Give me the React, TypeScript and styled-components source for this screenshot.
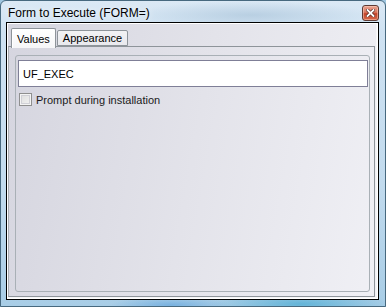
import styled, { createGlobalStyle } from "styled-components";

const GlobalStyle = createGlobalStyle`
  html, body {
    margin: 0;
    padding: 0;
    background: #9fc6e0;
  }
  * {
    box-sizing: border-box;
  }
`;

const Window = styled.div`
  width: 386px;
  height: 307px;
  display: flex;
  flex-direction: column;
  padding: 0 6px 6px 5px;
  border: 1px solid #47697f;
  border-radius: 6px 6px 0 0;
  background:
    radial-gradient(ellipse 90px 12px at 300px 303px, rgba(70, 170, 210, 0.7), transparent),
    radial-gradient(ellipse 60px 8px at 170px 304px, rgba(90, 160, 220, 0.6), transparent),
    radial-gradient(ellipse 120px 14px at 250px 14px, rgba(150, 180, 205, 0.45), transparent),
    linear-gradient(180deg, #dbe9f5 0%, #cfe2f2 10%, #c2dbee 60%, #a8cde6 100%);
  font-family: "Liberation Sans", Arial, sans-serif;
  overflow: hidden;
`;

const TitleBar = styled.div`
  height: 21px;
  display: flex;
  align-items: flex-start;
  justify-content: space-between;
`;

const Title = styled.span`
  margin-top: 5px;
  padding-left: 2px;
  font-size: 12px;
  color: #000;
  text-shadow: 0 0 6px rgba(255, 255, 255, 0.9);
`;

const CloseButton = styled.div`
  width: 17px;
  height: 16px;
  margin-top: 4px;
  display: flex;
  align-items: center;
  justify-content: center;
  border: 1px solid #5e3a34;
  border-radius: 3px;
  background: linear-gradient(180deg, #e9a593 0%, #d9775f 45%, #c2442a 55%, #d5684a 100%);
  box-shadow: inset 0 0 0 1px rgba(255, 210, 190, 0.5);
`;

const Client = styled.div`
  flex: 1;
  display: flex;
  flex-direction: column;
  border: 1px solid #000;
  padding: 5px 3px 2px 1px;
  background: linear-gradient(100deg, #d5d5df 0%, #e3e3ea 50%, #f0f0f5 100%);
  box-shadow: inset 1px 1px 0 #fff, inset -1px -1px 0 #fff, inset -2px -2px 0 #f6f6f8;
`;

const TabStrip = styled.div`
  display: flex;
  align-items: flex-end;
  height: 18px;
  padding-left: 3px;
  gap: 1px;
  position: relative;
  z-index: 1;
`;

const Tab = styled.div<{ $active?: boolean }>`
  font-size: 11px;
  color: #000;
  border: 1px solid #8e949a;
  border-radius: 2px 2px 0 0;
  padding: 0 5px;
  display: flex;
  align-items: center;
  height: ${(p) => (p.$active ? "20px" : "16px")};
  margin-bottom: ${(p) => (p.$active ? "-2px" : "0")};
  border-bottom: ${(p) => (p.$active ? "none" : "1px solid #8e949a")};
  background: ${(p) =>
    p.$active
      ? "linear-gradient(180deg, #ffffff 0%, #f6f6f8 100%)"
      : "linear-gradient(180deg, #f2f2f4 0%, #e9e9ee 100%)"};
  box-shadow: ${(p) => (p.$active ? "inset 1px 1px 0 #fff" : "none")};
`;

const Panel = styled.div`
  flex: 1;
  display: flex;
  flex-direction: column;
  border: 1px solid #8e949a;
  border-left-color: #a9adb2;
  padding: 8px 4px 4px 6px;
`;

const GroupBox = styled.div`
  flex: 1;
  border: 1px solid #a9b0b6;
  border-radius: 3px;
  padding: 4px 1px 0 2px;
  display: flex;
  flex-direction: column;
  gap: 6px;
`;

const TextField = styled.div`
  height: 27px;
  border: 1px solid #7f7f97;
  background: #fff;
  display: flex;
  align-items: center;
  padding-left: 4px;
  font-size: 11px;
  color: #000;
`;

const CheckRow = styled.label`
  display: flex;
  align-items: center;
  gap: 4px;
  padding-left: 1px;
  font-size: 11px;
  color: #1a1a1a;
`;

const CheckBox = styled.span`
  width: 13px;
  height: 13px;
  border: 1px solid #8f8f8f;
  background: linear-gradient(135deg, #dcdcdc 0%, #f4f4f4 100%);
  box-shadow: inset 0 0 0 1px #f4f4f4, inset 0 0 0 2px #d0d0d6;
`;

function CloseGlyph() {
  return (
    <svg width="9" height="8" viewBox="0 0 9 8">
      <path
        d="M1.5 1 L7.5 7 M7.5 1 L1.5 7"
        stroke="#5a2a22"
        strokeWidth="3.2"
        strokeLinecap="square"
      />
      <path
        d="M1.5 1 L7.5 7 M7.5 1 L1.5 7"
        stroke="#fff"
        strokeWidth="1.8"
        strokeLinecap="square"
      />
    </svg>
  );
}

export default function App() {
  return (
    <>
      <GlobalStyle />
      <Window>
        <TitleBar>
          <Title>Form to Execute (FORM=)</Title>
          <CloseButton>
            <CloseGlyph />
          </CloseButton>
        </TitleBar>
        <Client>
          <TabStrip>
            <Tab $active>Values</Tab>
            <Tab>Appearance</Tab>
          </TabStrip>
          <Panel>
            <GroupBox>
              <TextField>UF_EXEC</TextField>
              <CheckRow>
                <CheckBox />
                Prompt during installation
              </CheckRow>
            </GroupBox>
          </Panel>
        </Client>
      </Window>
    </>
  );
}
